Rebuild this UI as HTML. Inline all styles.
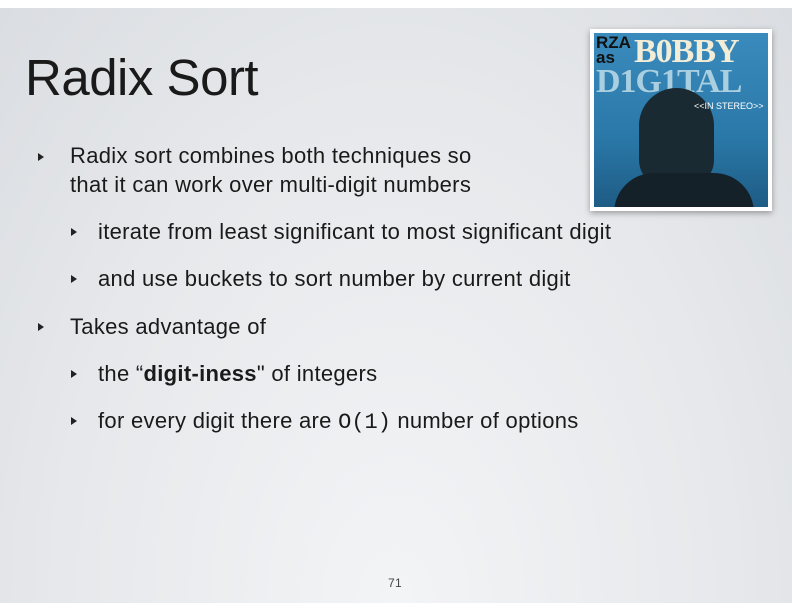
<!DOCTYPE html>
<html><head><style>
body{margin:0;width:792px;height:612px;background:#fff;overflow:hidden;position:relative;font-family:"Liberation Sans",sans-serif;color:#111}
.slide{position:absolute;left:0;top:8px;width:792px;height:595px;background:radial-gradient(ellipse at 50% 100%,#f3f4f6 0%,#e6e8eb 60%,#dadde1 100%)}
.t{position:absolute;white-space:nowrap;font-size:22px;letter-spacing:0.3px;color:#1a1a1a}
.b{position:absolute;width:0;height:0;border-top:4.5px solid transparent;border-bottom:4.5px solid transparent;border-left:6px solid #222}
h1{position:absolute;left:25px;top:40px;margin:0;font-weight:normal;font-size:51px;letter-spacing:-0.5px;color:#1a1a1a}
.mono{font-family:"Liberation Mono",monospace;font-size:22px;letter-spacing:0}
.img{position:absolute;left:590px;top:21px;width:174px;height:174px;border:4px solid #fff;box-shadow:0 2px 6px rgba(0,0,0,.35);background:linear-gradient(#3a8bbd,#2a78a8 60%,#1e5c85);overflow:hidden}
</style></head><body>
<div class="slide">
<h1>Radix Sort</h1>
<div class="b" style="left:38px;top:145px"></div>
<div class="t" style="left:70px;top:135px">Radix sort combines both techniques so</div>
<div class="t" style="left:70px;top:164px">that it can work over multi-digit numbers</div>
<div class="b" style="left:71px;top:220px"></div>
<div class="t" style="left:98px;top:211px">iterate from least significant to most significant digit</div>
<div class="b" style="left:71px;top:267px"></div>
<div class="t" style="left:98px;top:258px">and use buckets to sort number by current digit</div>
<div class="b" style="left:38px;top:315px"></div>
<div class="t" style="left:70px;top:306px">Takes advantage of</div>
<div class="b" style="left:71px;top:362px"></div>
<div class="t" style="left:98px;top:353px">the “<b>digit-iness</b>" of integers</div>
<div class="b" style="left:71px;top:409px"></div>
<div class="t" style="left:98px;top:400px">for every digit there are <span class="mono">O(1)</span> number of options</div>
<div class="t" style="left:388px;top:568px;font-size:12px;color:#444">71</div>
<div class="img">
 <div style="position:absolute;left:2px;top:2px;font:bold 17px/15px 'Liberation Sans';color:#111">RZA<br>as</div>
 <div style="position:absolute;left:40px;top:0;font:bold 34px 'Liberation Serif';color:#f3ecd6;letter-spacing:-1px">B0BBY</div>
 <div style="position:absolute;left:2px;top:30px;font:bold 34px 'Liberation Serif';color:#a9cfe0;letter-spacing:-1px">D1G1TAL</div>
 <div style="position:absolute;left:45px;top:55px;width:75px;height:100px;border-radius:40px 40px 30px 30px;background:#1a2a33"></div>
 <div style="position:absolute;left:20px;top:140px;width:140px;height:50px;border-radius:40px 40px 0 0;background:#142128"></div>
 <div style="position:absolute;left:100px;top:68px;font:9px 'Liberation Sans';color:#fff">&lt;&lt;IN STEREO&gt;&gt;</div>
</div>
</div>
</body></html>
